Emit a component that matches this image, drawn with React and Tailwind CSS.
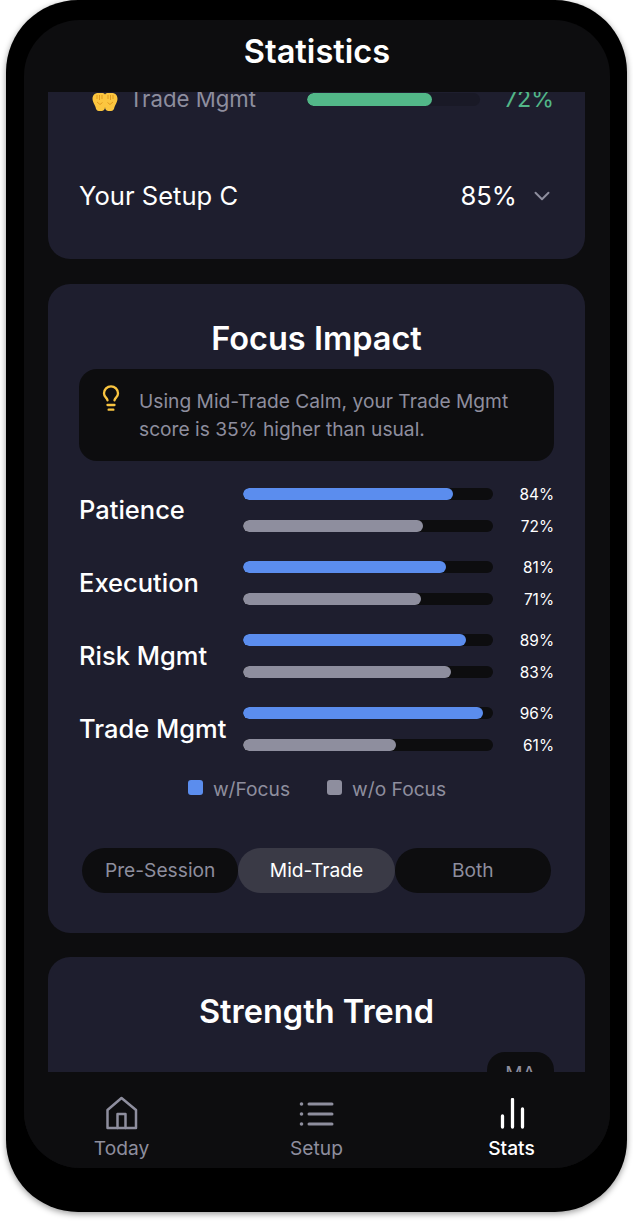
import React from "react";
import { ChevronDown, Lightbulb } from "lucide-react";

const rows = [
  { name: "Patience", a: 84, b: 72 },
  { name: "Execution", a: 81, b: 71 },
  { name: "Risk Mgmt", a: 89, b: 83 },
  { name: "Trade Mgmt", a: 96, b: 61 },
];

function Bar({ value, color }) {
  return (
    <div className="flex items-center h-[32px]">
      <div className="w-[250px] h-[12px] rounded-full bg-[#0d0d0f] overflow-hidden">
        <div className={`h-full rounded-full ${color}`} style={{ width: `${value}%` }} />
      </div>
      <span className="w-[61px] pt-[2px] text-right text-[15.4px] text-white">{value}%</span>
    </div>
  );
}

function Hands() {
  return (
    <svg width="26" height="18" viewBox="0 0 26 18" className="shrink-0">
      <path d="M0.500 6C0.500 2 3 0 6 0h4.500c2 0 2.500 1 2.500 2v12c0 2.500-1.500 4-3.500 4H7c-2 0-3-1.500-3.500-4C2.500 11 0.500 9 0.500 6z" fill="#fcc63f" />
      <path d="M25.500 6c0-4-2.500-6-5.500-6h-4.500c-2 0-2.500 1-2.500 2v12c0 2.500 1.500 4 3.500 4H19c2 0 3-1.500 3.500-4C23.500 11 25.500 9 25.500 6z" fill="#fcc63f" />
      <path d="M5 2v4M7.500 2v5M10 2v4M16 2v4M18.500 2v5M21 2v4M5 9l3 2.500 2.500-2M21 9l-3 2.500-2.500-2" stroke="#e09a1f" strokeWidth="1" fill="none" />
    </svg>
  );
}

function HomeIcon() {
  return (
    <svg width="36" height="36" viewBox="0 0 36 36" fill="none" stroke="currentColor" strokeWidth="2.500" strokeLinejoin="round" strokeLinecap="round">
      <path d="M3.500 14 17.500 2 32 14v18H3.500z" />
      <path d="M13.500 32V18h8v14" />
    </svg>
  );
}

function ListIcon() {
  return (
    <svg width="38" height="26" viewBox="0 0 38 26" fill="none" stroke="currentColor" strokeWidth="3" strokeLinecap="round">
      <path d="M11 3h23M11 13h23M11 23h23" />
      <circle cx="3.500" cy="3" r="1.800" fill="currentColor" stroke="none" />
      <circle cx="3.500" cy="13" r="1.800" fill="currentColor" stroke="none" />
      <circle cx="3.500" cy="23" r="1.800" fill="currentColor" stroke="none" />
    </svg>
  );
}

function BarsIcon() {
  return (
    <svg width="26" height="32" viewBox="0 0 26 32" fill="none" stroke="currentColor" strokeWidth="3.300" strokeLinecap="round">
      <path d="M3.500 29V18M13.500 29V1.500M23.500 29V11" />
    </svg>
  );
}

function Tab({ label, active }) {
  return (
    <div className={`flex-1 h-[45px] rounded-full flex items-center justify-center text-[19.2px] ${active ? "bg-[#3a3a46] text-white" : "bg-[#0d0d0f] text-[#8e8e9e]"}`}>
      {label}
    </div>
  );
}

function NavItem({ icon, label, active }) {
  return (
    <div className={`w-[195px] flex flex-col items-center ${active ? "text-white font-medium" : "text-[#8e8e9e]"}`}>
      <div className="h-[44px] flex items-center justify-center">{icon}</div>
      <span className="text-[19.2px] leading-[24px]">{label}</span>
    </div>
  );
}

export default function App() {
  return (
    <div className="w-[633px] h-[1224px] bg-white font-['Inter',sans-serif] overflow-hidden">
      <div className="ml-[6px] w-[621px] h-[1212px] rounded-[72px] bg-black pt-[20px] pl-[18px] pr-[17px] shadow-[0_2px_6px_rgba(0,0,0,0.4)]">
        <div className="h-[1148px] rounded-[56px] bg-[#0d0d0f] overflow-hidden flex flex-col">
          <header className="h-[72px] shrink-0 flex items-center justify-center text-[32.6px] font-semibold text-white">
            <span className="-mt-[10px]">Statistics</span>
          </header>

          <main className="flex-1 min-h-0 overflow-hidden pl-[24px] pr-[25px]">
            <section className="-mt-[40px] h-[207px] rounded-b-[22px] bg-[#1e1e2e] px-[31px] overflow-hidden">
              <div className="h-[94px] flex items-center text-[#8e8e9e] whitespace-nowrap">
                <div className="ml-[13px] mt-[6px]"><Hands /></div>
                <span className="ml-[11px] w-[125px] text-[22.2px]">Trade Mgmt</span>
                <div className="ml-[53px] w-[173px] h-[13px] rounded-full bg-[#191926] overflow-hidden">
                  <div className="h-full w-[125px] rounded-full bg-[#52b788]" />
                </div>
                <span className="ml-auto text-[23.2px] text-[#52b788]">72%</span>
              </div>
              <div className="mt-[35px] h-[30px] flex items-center text-white text-[25.6px]">
                <span>Your Setup C</span>
                <span className="ml-auto">85%</span>
                <ChevronDown size={26} strokeWidth={1.8} className="ml-[12px] -mr-[1px] text-[#8e8e9e]" />
              </div>
            </section>

            <section className="mt-[25px] h-[649px] rounded-[22px] bg-[#1e1e2e] px-[31px] pt-[33px]">
              <h2 className="text-center text-[32.5px] leading-[44px] font-semibold text-white">Focus Impact</h2>
              <div className="mt-[8px] h-[92px] rounded-[18px] bg-[#0d0d0f] flex pl-[18px] pr-[30px] pt-[17px]">
                <Lightbulb size={28} strokeWidth={2} className="shrink-0 mr-[14px] -mt-[2px] text-[#f9c440]" />
                <p className="text-[19.2px] leading-[28px] text-[#8e8e9e] mt-[1px]">
                  Using Mid-Trade Calm, your Trade Mgmt score is 35% higher than usual.
                </p>
              </div>
              <div className="mt-[17px] flex flex-col gap-[9px]">
                {rows.map((r) => (
                  <div key={r.name} className="flex items-center h-[64px]">
                    <span className="w-[164px] shrink-0 text-[25.5px] font-medium text-white whitespace-nowrap">{r.name}</span>
                    <div>
                      <Bar value={r.a} color="bg-[#5b8dee]" />
                      <Bar value={r.b} color="bg-[#8e8e9e]" />
                    </div>
                  </div>
                ))}
              </div>
              <div className="mt-[16px] flex justify-center gap-[37px] text-[19.2px] text-[#8e8e9e] leading-[24px]">
                <div className="flex items-center gap-[10px]">
                  <span className="ml-[1px] w-[15px] h-[15px] -mt-[3px] rounded-[3px] bg-[#5b8dee]" />w/Focus
                </div>
                <div className="flex items-center gap-[10px]">
                  <span className="w-[15px] h-[15px] -mt-[3px] rounded-[3px] bg-[#8e8e9e]" />w/o Focus
                </div>
              </div>
              <div className="mt-[47px] mx-[3px] flex">
                <Tab label="Pre-Session" />
                <Tab label="Mid-Trade" active />
                <Tab label="Both" />
              </div>
            </section>

            <section className="mt-[24px] h-[300px] rounded-[22px] bg-[#1e1e2e] px-[31px] pt-[33px]">
              <h2 className="text-center text-[32.5px] leading-[44px] font-semibold text-white -mt-[0.5px]">Strength Trend</h2>
              <div className="mt-[18.5px] ml-auto w-[67px] h-[60px] rounded-[18px] bg-[#0d0d0f] flex justify-center pt-[7px] text-[19.2px] text-[#8e8e9e]">MA</div>
            </section>
          </main>

          <nav className="h-[96px] shrink-0 bg-[#0d0d0f] flex pt-[20px]">
            <NavItem icon={<HomeIcon />} label="Today" />
            <NavItem icon={<ListIcon />} label="Setup" />
            <NavItem icon={<BarsIcon />} label="Stats" active />
          </nav>
        </div>
      </div>
    </div>
  );
}
